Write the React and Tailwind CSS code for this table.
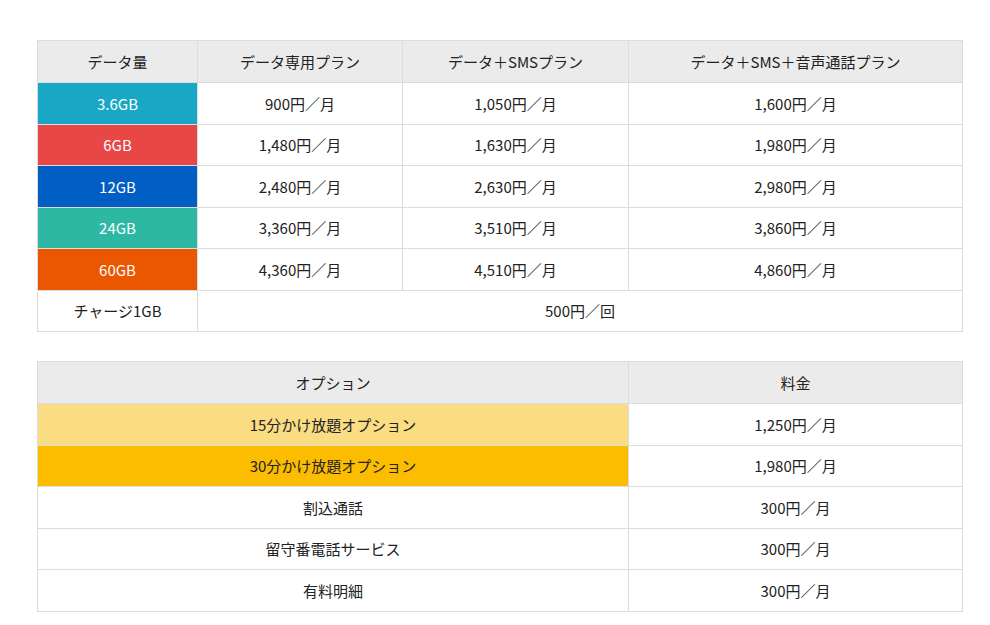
import React from 'react';

const plans = [
  { gb: '3.6GB', color: 'bg-[#19a7c6]', prices: ['900円／月', '1,050円／月', '1,600円／月'] },
  { gb: '6GB', color: 'bg-[#e94646]', prices: ['1,480円／月', '1,630円／月', '1,980円／月'] },
  { gb: '12GB', color: 'bg-[#005ec4]', prices: ['2,480円／月', '2,630円／月', '2,980円／月'] },
  { gb: '24GB', color: 'bg-[#2cb8a3]', prices: ['3,360円／月', '3,510円／月', '3,860円／月'] },
  { gb: '60GB', color: 'bg-[#eb5600]', prices: ['4,360円／月', '4,510円／月', '4,860円／月'] },
];

const options = [
  { name: '15分かけ放題オプション', color: 'bg-[#fadc82]', price: '1,250円／月' },
  { name: '30分かけ放題オプション', color: 'bg-[#fcbc00]', price: '1,980円／月' },
  { name: '割込通話', color: 'bg-white', price: '300円／月' },
  { name: '留守番電話サービス', color: 'bg-white', price: '300円／月' },
  { name: '有料明細', color: 'bg-white', price: '300円／月' },
];

const cell = 'border border-[#dcdcdc] text-center align-middle font-normal';

export default function App() {
  return (
    <div
      className="w-[990px] h-[625px] bg-white text-[#222] text-[15px] leading-none pt-[40px] pl-[37px]"
      style={{ fontFamily: '"Noto Sans CJK JP", "Noto Sans", sans-serif' }}
    >
      {/* Plan table */}
      <table className="border-collapse w-[925px] table-fixed">
        <colgroup>
          <col className="w-[160px]" />
          <col className="w-[205px]" />
          <col className="w-[226px]" />
          <col className="w-[334px]" />
        </colgroup>
        <thead>
          <tr className="h-[42px] bg-[#ebebeb]">
            <th className={cell}>データ量</th>
            <th className={cell}>データ専用プラン</th>
            <th className={cell}>データ＋SMSプラン</th>
            <th className={cell}>データ＋SMS＋音声通話プラン</th>
          </tr>
        </thead>
        <tbody>
          {plans.map((p) => (
            <tr key={p.gb} className="h-[41.5px]">
              <td className={`${cell} ${p.color} text-white font-medium`}>{p.gb}</td>
              {p.prices.map((price, i) => (
                <td key={i} className={cell}>{price}</td>
              ))}
            </tr>
          ))}
          <tr className="h-[41.5px]">
            <td className={cell}>チャージ1GB</td>
            <td className={cell} colSpan={3}>500円／回</td>
          </tr>
        </tbody>
      </table>

      {/* Option table */}
      <table className="border-collapse w-[925px] table-fixed mt-[29px]">
        <colgroup>
          <col className="w-[591px]" />
          <col className="w-[334px]" />
        </colgroup>
        <thead>
          <tr className="h-[42px] bg-[#ebebeb]">
            <th className={cell}>オプション</th>
            <th className={cell}>料金</th>
          </tr>
        </thead>
        <tbody>
          {options.map((o) => (
            <tr key={o.name} className="h-[41.5px]">
              <td className={`${cell} ${o.color}`}>{o.name}</td>
              <td className={cell}>{o.price}</td>
            </tr>
          ))}
        </tbody>
      </table>
    </div>
  );
}
